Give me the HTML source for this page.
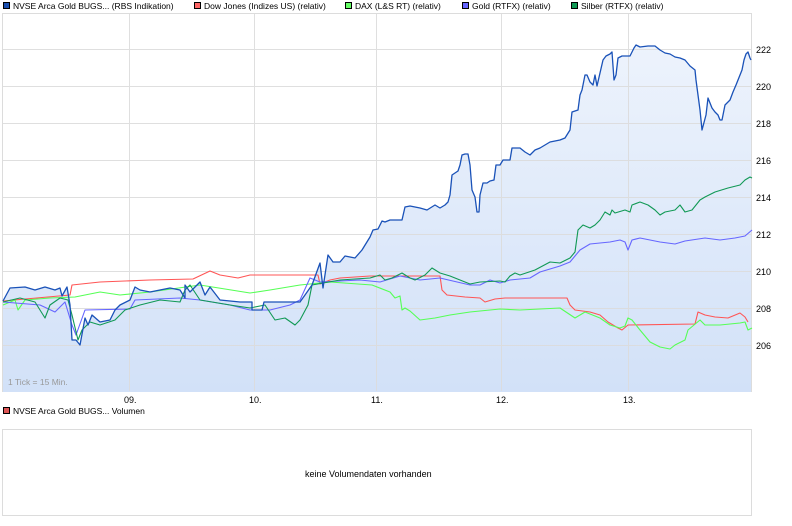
<!DOCTYPE html>
<html><head><meta charset="utf-8"><style>
html,body{margin:0;padding:0;background:#fff;}
body{width:792px;height:526px;overflow:hidden;position:relative;font-family:"Liberation Sans",sans-serif;}
</style></head><body>
<svg width="792" height="526" viewBox="0 0 792 526" xmlns="http://www.w3.org/2000/svg" style="position:absolute;left:0;top:0">
<defs>
<linearGradient id="g" x1="0" y1="0" x2="0" y2="1">
<stop offset="0" stop-color="#edf3fc"/><stop offset="1" stop-color="#d2e1f8"/>
</linearGradient>
</defs>
<g font-family="Liberation Sans, sans-serif" font-size="8.5" fill="#000">
<rect x="3.5" y="2.5" width="6" height="6" fill="#1a4fb0" stroke="#000" stroke-width="1"/><text x="13" y="9">NVSE Arca Gold BUGS... (RBS Indikation)</text>
<rect x="194.5" y="2.5" width="6" height="6" fill="#ff6666" stroke="#000"/><text x="204" y="9">Dow Jones (Indizes US) (relativ)</text>
<rect x="345.5" y="2.5" width="6" height="6" fill="#66ff66" stroke="#000"/><text x="355" y="9">DAX (L&amp;S RT) (relativ)</text>
<rect x="462.5" y="2.5" width="6" height="6" fill="#6666ff" stroke="#000"/><text x="472" y="9">Gold (RTFX) (relativ)</text>
<rect x="571.5" y="2.5" width="6" height="6" fill="#119955" stroke="#000"/><text x="581" y="9">Silber (RTFX) (relativ)</text>
</g>
<rect x="2.5" y="13.5" width="749" height="378" fill="#fff" stroke="#dcdcdc"/>
<path d="M3,392 L3,301 10,288 25,287 35,290 45,287 55,290 60,288 62,296 67,287 70,305 72,340 76,340 80,345 85,318 88,325 92,315 100,322 110,320 115,310 120,305 130,300 135,287 140,290 150,292 160,290 170,288 180,290 185,298 185,285 190,292 200,282 205,295 210,287 220,300 240,302 252,302 252,310 262,310 264,302 300,302 305,295 312,285 320,263 323,288 328,255 333,262 340,262 345,256 355,258 362,250 370,237 373,230 378,229 382,221 385,222 390,220 402,220 405,207 410,206 420,208 427,210 435,205 440,208 445,205 448,202 450,195 452,175 455,173 458,171 460,165 462,155 465,154 468,154 470,165 472,190 475,197 477,212 479,212 480,195 483,183 487,183 490,181 494,180 496,165 500,165 503,160 510,160 512,148 520,148 525,152 530,155 535,150 540,148 550,142 560,140 565,138 570,130 572,112 578,110 580,95 582,90 585,75 587,75 590,82 593,85 595,75 597,86 600,73 603,60 606,56 610,54 612,52 614,80 616,75 618,58 622,56 630,56 634,48 636,45 640,47 648,46 655,46 660,50 665,53 670,54 675,57 680,58 685,60 690,66 695,70 696,80 700,110 702,130 706,115 708,98 712,108 715,112 718,115 720,120 722,120 725,105 730,100 733,92 736,85 738,80 742,70 744,60 746,54 748,52 750,58 751,60 751,392 Z" fill="url(#g)"/>
<g stroke="#dcdcdc" stroke-width="1" fill="none" opacity="0.9">
<path d="M129.5,14V391 M254.5,14V391 M376.5,14V391 M501.5,14V391 M628.5,14V391"/>
<path d="M3,49.5H751 M3,86.5H751 M3,123.5H751 M3,160.5H751 M3,197.5H751 M3,234.5H751 M3,271.5H751 M3,308.5H751 M3,345.5H751"/>
</g>
<g fill="none" stroke-width="1.1" stroke-linejoin="round">
<polyline stroke="#ff5555" points="3,301 70,295 72,285 100,282 150,280 193,279 210,271 220,275 238,278 250,275 318,275 320,284 330,280 340,278 370,276 440,276 442,290 447,295 465,297 480,298 485,302 495,299 505,298 567,298 570,305 575,310 590,312 600,315 608,322 618,328 622,330 628,325 695,324 698,312 705,315 715,317 728,318 740,313 745,317 748,322"/>
<polyline stroke="#55ff55" points="3,305 15,300 18,310 25,300 50,298 75,297 100,292 120,295 150,292 200,285 250,293 270,290 300,285 330,282 372,285 390,292 395,298 400,296 402,310 405,308 410,311 420,320 435,318 450,315 470,312 500,309 520,310 560,308 575,318 585,312 600,318 610,325 620,328 625,326 628,318 632,320 640,330 650,342 660,347 670,349 675,345 685,340 688,330 700,320 705,325 720,325 740,323 745,322 748,330 752,328"/>
<polyline stroke="#6666ff" points="3,302 40,305 55,312 65,302 72,325 76,335 85,310 130,309 135,300 180,298 200,300 230,305 250,310 270,310 290,305 300,300 310,278 320,282 360,280 380,282 400,276 420,280 440,278 470,285 480,285 490,280 500,283 510,280 530,278 540,272 560,266 570,262 575,256 580,250 590,244 610,242 620,240 625,242 628,250 632,240 640,238 660,242 675,244 685,241 705,238 720,240 735,238 745,236 752,230"/>
<polyline stroke="#119955" points="3,302 20,298 35,302 45,318 50,305 60,298 68,300 72,315 78,340 82,330 90,322 100,325 115,320 125,310 140,305 160,300 180,302 185,290 190,285 200,300 230,305 250,308 265,305 275,320 285,318 295,325 300,320 308,305 312,285 340,280 370,278 380,275 385,280 392,278 402,273 410,278 415,280 425,275 432,268 440,273 450,276 470,284 480,282 500,281 505,282 510,276 515,273 520,275 535,270 550,262 560,263 570,258 575,252 578,230 583,225 590,228 595,225 600,220 605,212 610,215 612,210 615,213 625,210 630,212 632,205 640,202 648,205 655,210 660,215 665,212 675,210 680,205 685,212 692,210 700,200 705,197 715,192 728,188 740,185 745,180 750,177 752,178"/>
<polyline stroke="#1a52b8" stroke-width="1.3" points="3,301 10,288 25,287 35,290 45,287 55,290 60,288 62,296 67,287 70,305 72,340 76,340 80,345 85,318 88,325 92,315 100,322 110,320 115,310 120,305 130,300 135,287 140,290 150,292 160,290 170,288 180,290 185,298 185,285 190,292 200,282 205,295 210,287 220,300 240,302 252,302 252,310 262,310 264,302 300,302 305,295 312,285 320,263 323,288 328,255 333,262 340,262 345,256 355,258 362,250 370,237 373,230 378,229 382,221 385,222 390,220 402,220 405,207 410,206 420,208 427,210 435,205 440,208 445,205 448,202 450,195 452,175 455,173 458,171 460,165 462,155 465,154 468,154 470,165 472,190 475,197 477,212 479,212 480,195 483,183 487,183 490,181 494,180 496,165 500,165 503,160 510,160 512,148 520,148 525,152 530,155 535,150 540,148 550,142 560,140 565,138 570,130 572,112 578,110 580,95 582,90 585,75 587,75 590,82 593,85 595,75 597,86 600,73 603,60 606,56 610,54 612,52 614,80 616,75 618,58 622,56 630,56 634,48 636,45 640,47 648,46 655,46 660,50 665,53 670,54 675,57 680,58 685,60 690,66 695,70 696,80 700,110 702,130 706,115 708,98 712,108 715,112 718,115 720,120 722,120 725,105 730,100 733,92 736,85 738,80 742,70 744,60 746,54 748,52 750,58 751,60"/>
</g>
<g font-family="Liberation Sans, sans-serif" font-size="9" fill="#000">
<text x="756" y="53">222</text><text x="756" y="90">220</text><text x="756" y="127">218</text><text x="756" y="164">216</text><text x="756" y="201">214</text><text x="756" y="238">212</text><text x="756" y="275">210</text><text x="756" y="312">208</text><text x="756" y="349">206</text>
<text x="124" y="403">09.</text><text x="249" y="403">10.</text><text x="371" y="403">11.</text><text x="496" y="403">12.</text><text x="623" y="403">13.</text>
<text x="8" y="385" fill="#999" font-size="8.5">1 Tick = 15 Min.</text>
<rect x="3.5" y="407.5" width="6" height="6" fill="#dd5555" stroke="#000"/><text x="13" y="414" font-size="8.5">NVSE Arca Gold BUGS... Volumen</text>
</g>
<rect x="2.5" y="429.5" width="749" height="86" fill="#fff" stroke="#dcdcdc"/>
<text x="305" y="477" font-family="Liberation Sans, sans-serif" font-size="9">keine Volumendaten vorhanden</text>
</svg>
</body></html>
